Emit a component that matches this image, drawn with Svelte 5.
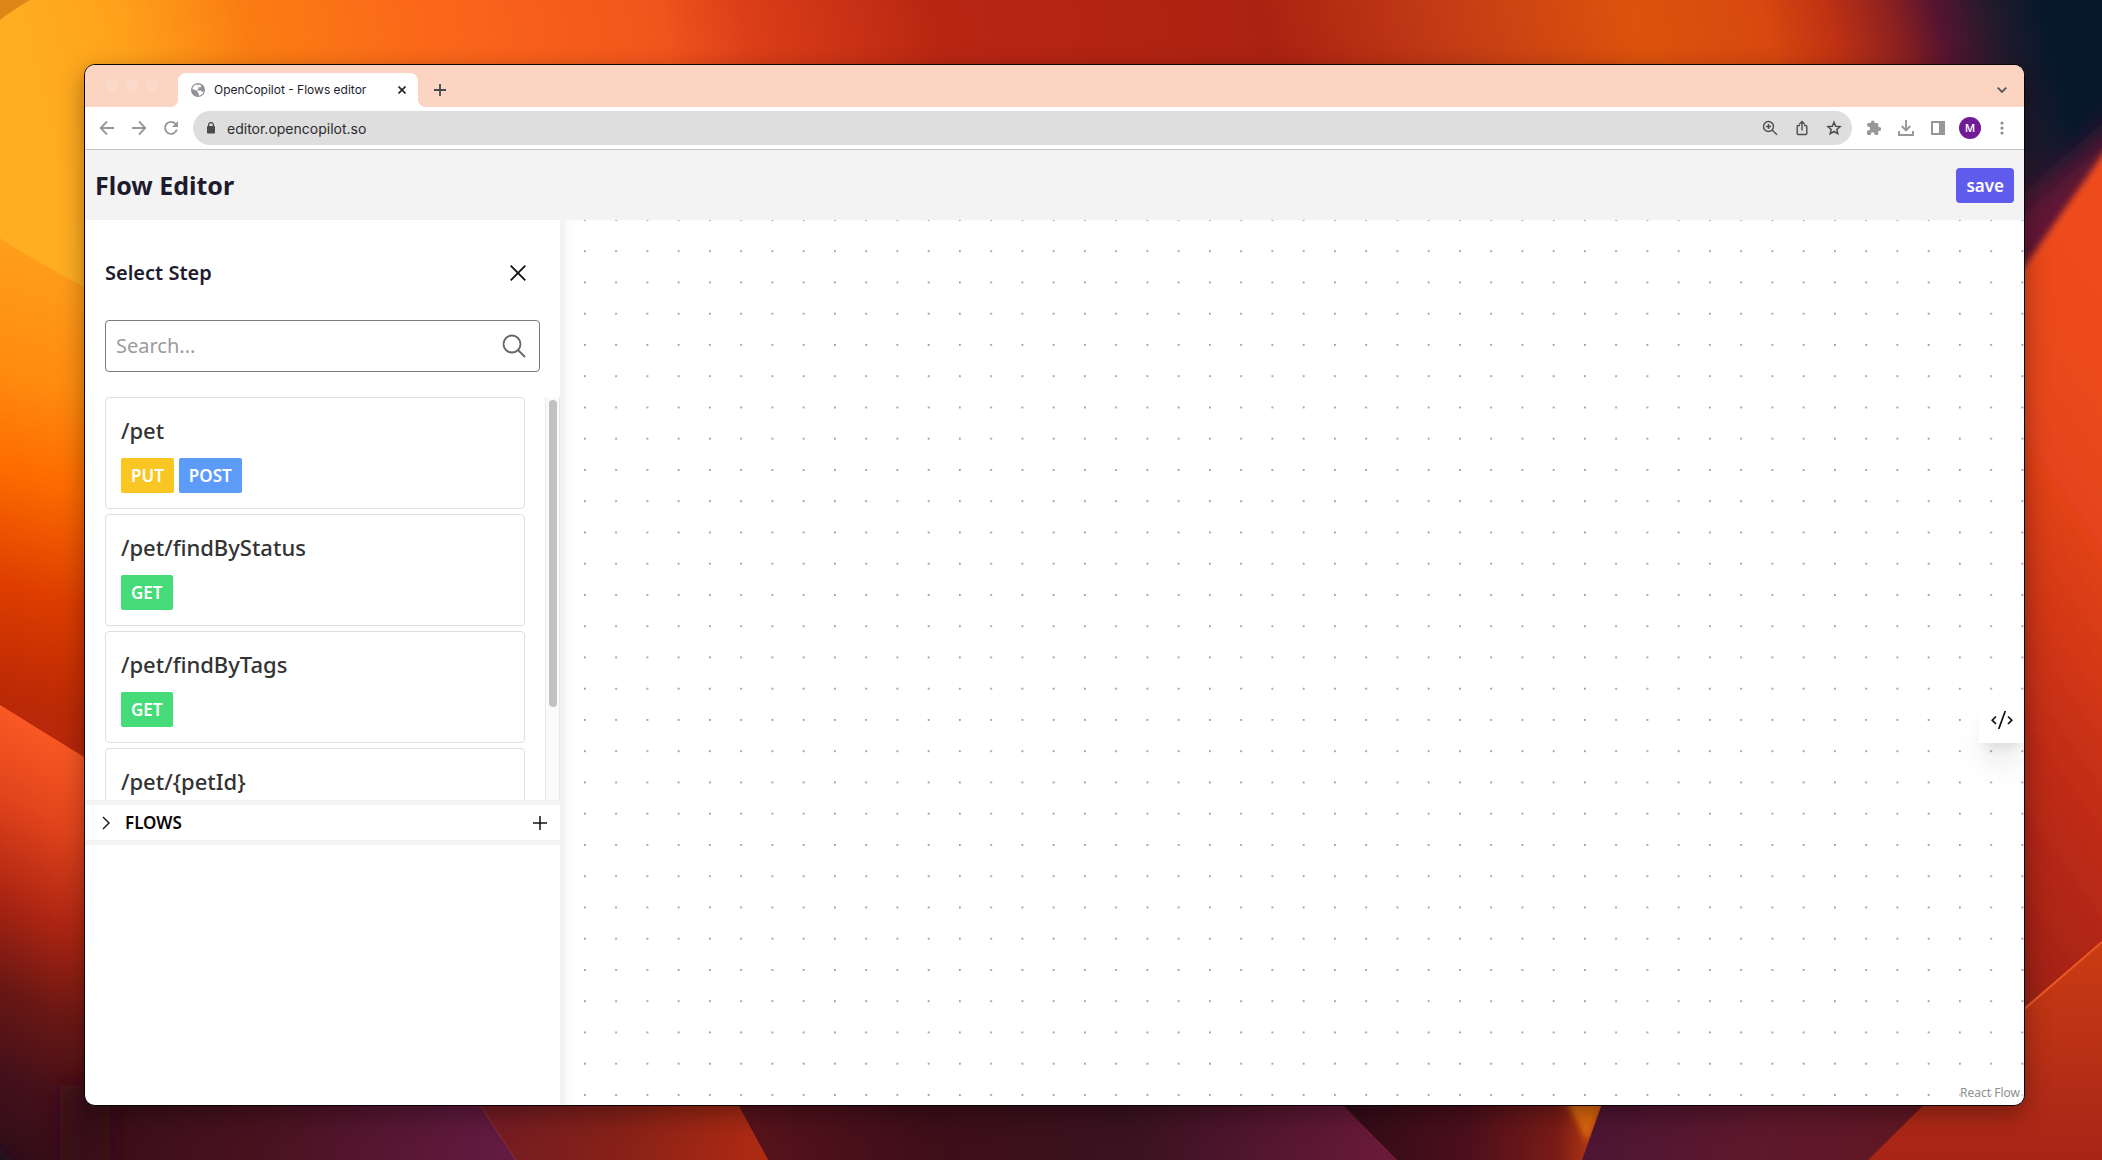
<script>
    let search = '';

    const paths = [
        { name: '/pet', methods: ['PUT', 'POST'] },
        { name: '/pet/findByStatus', methods: ['GET'] },
        { name: '/pet/findByTags', methods: ['GET'] },
        { name: '/pet/{petId}', methods: [] }
    ];

    $: visiblePaths = paths.filter((path) => path.name.toLowerCase().includes(search.toLowerCase()));
</script>

<div class="desktop">
    <svg class="wallpaper" viewBox="0 0 2102 1160" preserveAspectRatio="none" aria-hidden="true">
        <defs>
            <linearGradient id="top" gradientUnits="userSpaceOnUse" x1="0" y1="0" x2="2050" y2="-500">
                <stop offset="0" stop-color="#ffae22" />
                <stop offset="0.05" stop-color="#ffa31b" />
                <stop offset="0.11" stop-color="#fb7d12" />
                <stop offset="0.19" stop-color="#fb681a" />
                <stop offset="0.3" stop-color="#f2551c" />
                <stop offset="0.34" stop-color="#dc3f18" />
                <stop offset="0.43" stop-color="#b82612" />
                <stop offset="0.58" stop-color="#ac2211" />
                <stop offset="0.66" stop-color="#c23b15" />
                <stop offset="0.75" stop-color="#dd530d" />
                <stop offset="0.81" stop-color="#d8480f" />
                <stop offset="0.84" stop-color="#bf3213" />
                <stop offset="0.87" stop-color="#8b2020" />
                <stop offset="0.89" stop-color="#561430" />
                <stop offset="0.915" stop-color="#231a2c" />
                <stop offset="0.94" stop-color="#07182c" />
            </linearGradient>
            <linearGradient id="left" x1="0.1" y1="0" x2="0" y2="1">
                <stop offset="0" stop-color="#ffa01c" />
                <stop offset="0.25" stop-color="#ff8a0e" />
                <stop offset="0.42" stop-color="#fd6a00" />
                <stop offset="0.62" stop-color="#dd3d00" />
                <stop offset="0.8" stop-color="#bd2a05" />
                <stop offset="1" stop-color="#ab2216" />
            </linearGradient>
            <linearGradient id="leftLow" x1="0.1" y1="0" x2="0" y2="1">
                <stop offset="0" stop-color="#fb5a24" />
                <stop offset="0.2" stop-color="#e2441c" />
                <stop offset="0.42" stop-color="#ad2512" />
                <stop offset="0.62" stop-color="#691714" />
                <stop offset="0.82" stop-color="#42101a" />
                <stop offset="1" stop-color="#300d18" />
            </linearGradient>
            <linearGradient id="right" x1="0.2" y1="0" x2="0" y2="1">
                <stop offset="0" stop-color="#ee4b1c" />
                <stop offset="0.25" stop-color="#e6451a" />
                <stop offset="0.55" stop-color="#c22d15" />
                <stop offset="0.8" stop-color="#a42212" />
                <stop offset="1" stop-color="#781912" />
            </linearGradient>
            <linearGradient id="rightLow" x1="0" y1="0" x2="0" y2="1">
                <stop offset="0" stop-color="#c93c13" />
                <stop offset="1" stop-color="#a82417" />
            </linearGradient>
            <linearGradient id="plum">
                <stop offset="0" stop-color="#380e19" />
                <stop offset="0.4" stop-color="#49121f" />
                <stop offset="1" stop-color="#641b44" />
            </linearGradient>
            <linearGradient id="brick">
                <stop offset="0" stop-color="#701b25" />
                <stop offset="0.5" stop-color="#872118" />
                <stop offset="1" stop-color="#b02b12" />
            </linearGradient>
            <linearGradient id="wine">
                <stop offset="0" stop-color="#5a131c" />
                <stop offset="0.3" stop-color="#3e0e19" />
                <stop offset="0.6" stop-color="#3a1220" />
                <stop offset="1" stop-color="#6c1a3b" />
            </linearGradient>
            <linearGradient id="ember">
                <stop offset="0" stop-color="#2d0b18" />
                <stop offset="0.5" stop-color="#4b0f1b" />
                <stop offset="0.82" stop-color="#7a1b17" />
                <stop offset="1" stop-color="#c94310" />
            </linearGradient>
            <linearGradient id="berry">
                <stop offset="0" stop-color="#4c1533" />
                <stop offset="0.5" stop-color="#5f182c" />
                <stop offset="1" stop-color="#611722" />
            </linearGradient>
            <filter id="soft" x="-50%" y="-50%" width="200%" height="200%">
                <feGaussianBlur stdDeviation="14" />
            </filter>
            <filter id="glow">
                <feGaussianBlur stdDeviation="3" />
            </filter>
        </defs>
        <rect width="2102" height="1160" fill="url(#top)" />
        <path d="M0 0H30Q10 12 0 20Z" fill="#dd8617" />
        <path d="M0 238 Q70 285 200 340 V800 H0Z" fill="url(#left)" />
        <path d="M84 1090 H470 L516 1160 H84Z" fill="url(#plum)" />
        <path d="M0 705 L84 757 V1160 H0Z" fill="url(#leftLow)" />
        <path d="M60 1085 H110 V1180 H60Z" fill="#380e19" filter="url(#soft)" />
        <path d="M-40 1130 L20 1180 H-40Z" fill="#071a2e" filter="url(#soft)" />
        <path d="M1960 260 L2130 110 V200 L1950 360Z" fill="#641535" filter="url(#soft)" />
        <path d="M1980 330 L2110 144 V1080 H1980Z" fill="url(#right)" filter="url(#glow)" />
        <path d="M1980 1048 L2102 942 V1160 H1840Z" fill="url(#rightLow)" />
        <path d="M2000 1030 L2102 942" stroke="#ed5a20" stroke-width="2" />
        <path d="M470 1090 H730 L768 1160 H516Z" fill="url(#brick)" />
        <path d="M730 1090 H1328 L1397 1160 H768Z" fill="url(#wine)" />
        <path d="M1328 1090 H1607 L1582 1160 H1397Z" fill="url(#ember)" />
        <path d="M1566 1100 H1604 L1587 1142Z" fill="#dd6709" filter="url(#glow)" />
        <path d="M1607 1090 H1939 L1868 1160 H1582Z" fill="url(#berry)" />
    </svg>

    <div class="window">
        <div class="tab-strip">
            <div class="lights"><span></span><span></span><span></span></div>
            <div class="tab">
                <svg width="14" height="14" viewBox="0 0 14 14">
                    <circle cx="7" cy="7" r="7" fill="#919296" />
                    <path d="M6.6 1.3C3.8 1.5 1.8 3.4 1.4 5.8L4 7.3h2.2v1.6l1.5 1.2v2.6C10 12.5 12 10.900 12.6 8.5L11 8.7 9.8 7.4H6.7V5.7h1.5V4.2h1.7V2.3C9 1.8 8.3 1.5 7.7 1.4L6.4 3.2z" fill="#fff" />
                    <path d="M7.2 4.3h1.2v1.5H7.2zM1.3 7.6L4.6 9.3v3C2.7 11.3 1.4 9.6 1.3 7.6z" fill="#919296" />
                </svg>
                <span class="tab-title">OpenCopilot - Flows editor</span>
                <button class="plain" aria-label="Close tab">
                    <svg width="8" height="8" viewBox="0 0 8 8" stroke="#27272b" stroke-width="1.7"><path d="M0.5 0.5l7 7M7.5 0.5l-7 7" /></svg>
                </button>
            </div>
            <button class="plain new-tab" aria-label="New tab">
                <svg width="12" height="12" viewBox="0 0 12 12" stroke="#46474b" stroke-width="1.8"><path d="M6 0v12M0 6h12" /></svg>
            </button>
            <button class="plain tab-search" aria-label="Search tabs">
                <svg width="10" height="6" viewBox="0 0 10 6" fill="none" stroke="#55565a" stroke-width="1.8"><path d="M0.7 0.7L5 5l4.3-4.3" /></svg>
            </button>
        </div>

        <div class="toolbar">
            <button class="plain" aria-label="Back">
                <svg width="16" height="16" viewBox="0 0 16 16" fill="none" stroke="#96979b" stroke-width="1.8"><path d="M15 8H2M8 1.5L1.7 8 8 14.5" /></svg>
            </button>
            <button class="plain" aria-label="Forward">
                <svg width="16" height="16" viewBox="0 0 16 16" fill="none" stroke="#96979b" stroke-width="1.8"><path d="M1 8h13M8 1.5L14.3 8 8 14.5" /></svg>
            </button>
            <button class="plain" aria-label="Reload">
                <svg width="16" height="16" viewBox="0 0 16 16" fill="none" stroke="#96979b" stroke-width="1.9"><path d="M13.8 9.5A6 6 0 1 1 12.6 4" /><path d="M15 1v6H9z" fill="#96979b" stroke="none" /></svg>
            </button>
            <div class="omnibox">
                <svg width="10" height="12" viewBox="0 0 10 12"><rect x="1" y="4" width="8" height="7.5" rx="1" fill="#4a4b4f" /><path d="M2.6 5V3a2.4 2.4 0 0 1 4.8 0v2" fill="none" stroke="#4a4b4f" stroke-width="1.3" /></svg>
                <input class="url" aria-label="Address" value="editor.opencopilot.so" />
                <button class="plain" aria-label="Zoom">
                    <svg width="16" height="16" viewBox="0 0 16 16" fill="none" stroke="#4d4e52" stroke-width="1.4"><circle cx="6.5" cy="6.5" r="5" /><path d="M10 10l5 4.7M6.5 4v5M4 6.5h5" /></svg>
                </button>
                <button class="plain" aria-label="Share">
                    <svg width="16" height="16" viewBox="0 0 16 16" fill="none" stroke="#4d4e52" stroke-width="1.4"><path d="M6 5.5H4.2a1 1 0 0 0-1 1v7a1 1 0 0 0 1 1h7.6a1 1 0 0 0 1-1v-7a1 1 0 0 0-1-1H10M8 10.5V1.8M5.3 4.2L8 1.5l2.7 2.7" /></svg>
                </button>
                <button class="plain" aria-label="Bookmark">
                    <svg width="16" height="16" viewBox="0 0 16 16" fill="none" stroke="#4d4e52" stroke-width="1.5"><path d="M8 2.2l1.7 4 4.4.4-3.3 2.9 1 4.3L8 11.5l-3.8 2.3 1-4.3L1.9 6.6l4.4-.4z" /></svg>
                </button>
            </div>
            <button class="plain" aria-label="Extensions">
                <svg width="16" height="16" viewBox="0 0 16 16" fill="#96979b"><path d="M13.2 7H12.3V4.2a1.2 1.2 0 0 0-1.2-1.2H8.7V2.5a1.9 1.9 0 0 0-3.8 0V3H2.5A1.3 1.3 0 0 0 1.2 4.3V6.6h.9a2 2 0 0 1 0 4H1v3A1.3 1.3 0 0 0 2.4 15h2.4v-.8a1.9 1.9 0 0 1 3.8 0v.8h2.3A1.3 1.3 0 0 0 12.3 13.7V11h.9a2 2 0 0 0 0-4z" /></svg>
            </button>
            <button class="plain" aria-label="Downloads">
                <svg width="16" height="16" viewBox="0 0 16 16" fill="none" stroke="#96979b" stroke-width="1.9"><path d="M8 0v10M3.7 6L8 10.3 12.3 6M1 11v4h14v-4" /></svg>
            </button>
            <button class="plain" aria-label="Side panel">
                <svg width="16" height="16" viewBox="0 0 16 16"><path d="M1 1h14v14H1zM3 3v10h6V3z" fill="#96979b" fill-rule="evenodd" /></svg>
            </button>
            <button class="plain avatar" aria-label="Profile M">M</button>
            <button class="plain" aria-label="Menu">
                <svg width="16" height="16" viewBox="0 0 16 16" fill="#8c8d91"><circle cx="8" cy="3" r="1.6" /><circle cx="8" cy="8" r="1.6" /><circle cx="8" cy="13" r="1.6" /></svg>
            </button>
        </div>

        <header>
            <h1>Flow Editor</h1>
            <button class="save">save</button>
        </header>

        <div class="editor">
            <aside>
                <div class="select-step">
                    <div class="step-head">
                        <h2>Select Step</h2>
                        <button class="plain" aria-label="Close panel">
                            <svg width="16" height="16" viewBox="0 0 16 16" stroke="#111" stroke-width="1.8"><path d="M0.7 0.7l14.6 14.6M15.3 0.7L0.7 15.3" /></svg>
                        </button>
                    </div>
                    <label class="search">
                        <input type="text" placeholder="Search..." aria-label="Search paths" bind:value={search} />
                        <svg width="24" height="24" viewBox="0 0 24 24" fill="none" stroke="#666" stroke-width="1.8"><circle cx="10" cy="10" r="8.5" /><path d="M16 16l7 7" /></svg>
                    </label>
                </div>
                <div class="list-wrap">
                    <ul>
                        {#each visiblePaths as path}
                            <li>
                                <h3>{path.name}</h3>
                                <div class="methods">
                                    {#each path.methods as method}
                                        <span class="method {method.toLowerCase()}">{method}</span>
                                    {/each}
                                </div>
                            </li>
                        {/each}
                    </ul>
                    <div class="scroll-track"><div class="scroll-thumb"></div></div>
                </div>
                <div class="flows">
                    <button class="plain flows-toggle">
                        <svg width="8" height="14" viewBox="0 0 8 14" fill="none" stroke="#111" stroke-width="1.4"><path d="M1 1l6 6-6 6" /></svg>
                        FLOWS
                    </button>
                    <button class="plain" aria-label="Add flow">
                        <svg width="14" height="14" viewBox="0 0 14 14" stroke="#111" stroke-width="1.5"><path d="M7 0v14M0 7h14" /></svg>
                    </button>
                </div>
            </aside>

            <main>
                <svg class="dots" width="100%" height="100%" aria-hidden="true">
                    <defs>
                        <!-- 25 unit grid seen at 125% -->
                        <pattern id="grid" width="25" height="25" patternUnits="userSpaceOnUse" patternTransform="translate(19 -1) scale(1.25)">
                            <circle cx="0.7" cy="0.7" r="0.7" fill="#77777e" />
                        </pattern>
                    </defs>
                    <rect width="100%" height="100%" fill="url(#grid)" />
                </svg>
                <button class="code" aria-label="Show code">
                    <svg width="22" height="18" viewBox="0 0 22 18" fill="none" stroke="#111" stroke-width="1.7"><path d="M5 5.5L1.2 9.2 5 13M17 5.5l3.8 3.7L17 13M14.3 0L7.7 18" /></svg>
                </button>
                <a class="attribution" href="https://reactflow.dev">React Flow</a>
            </main>
        </div>
    </div>
</div>

<style>
    :global(body) {
        margin: 0;
    }

    .desktop {
        position: relative;
        display: flex;
        box-sizing: border-box;
        min-height: 100vh;
        padding: 64px 77px 54px 84px;
        font-family: 'Noto Sans', 'Open Sans', sans-serif;
        color: #1e1b2e;
    }

    .wallpaper {
        position: absolute;
        inset: 0;
        width: 100%;
        height: 100%;
    }

    .window {
        position: relative;
        flex: 1;
        display: flex;
        flex-direction: column;
        min-width: 0;
        overflow: hidden;
        background: #fff;
        border: 1px solid #0a0506;
        border-radius: 11px;
        box-shadow: 0 8px 24px rgba(0, 0, 0, 0.35);
    }

    h1, h2, h3, ul {
        margin: 0;
        padding: 0;
    }

    svg {
        display: block;
        flex: none;
    }

    .plain {
        display: flex;
        align-items: center;
        padding: 0;
        border: 0;
        background: none;
        font: inherit;
        color: inherit;
    }

    /* browser chrome */
    .tab-strip {
        display: flex;
        align-items: center;
        height: 42px;
        padding: 8px 17px 0 21px;
        box-sizing: border-box;
        background: #fbd5c1;
        font-family: Inter, sans-serif;
    }

    .lights {
        display: flex;
        gap: 8px;
        width: 72px;
        padding-bottom: 8px;
    }

    .lights span {
        width: 12px;
        height: 12px;
        border-radius: 50%;
        background: #fbdacb;
    }

    .tab {
        position: relative;
        display: flex;
        align-items: center;
        gap: 9px;
        width: 240px;
        height: 34px;
        box-sizing: border-box;
        padding: 0 12px 0 13px;
        border-radius: 8px 8px 0 0;
        background: #fff;
    }

    .tab::before,
    .tab::after {
        content: '';
        position: absolute;
        bottom: 0;
        left: -8px;
        width: 8px;
        height: 8px;
        background: radial-gradient(circle at 0 0, transparent 8px, #fff 8px);
    }

    .tab::after {
        left: 100%;
        background: radial-gradient(circle at 100% 0, transparent 8px, #fff 8px);
    }

    .tab-title {
        flex: 1;
        font-size: 12px;
        line-height: 16px;
        white-space: nowrap;
    }

    .new-tab {
        margin-left: 16px;
    }

    .tab-search {
        margin-left: auto;
    }

    .toolbar {
        display: flex;
        align-items: center;
        gap: 16px;
        height: 42px;
        padding: 0 14px;
        border-bottom: 1px solid #c3c8c4;
    }

    .omnibox {
        flex: 1;
        display: flex;
        align-items: center;
        gap: 16px;
        height: 34px;
        box-sizing: border-box;
        margin: 0 -2px;
        padding: 0 10px 0 13px;
        border-radius: 17px;
        background: #dedede;
    }

    .omnibox .url {
        flex: 1;
        min-width: 0;
        margin-left: -5px;
        padding: 0;
        border: 0;
        background: none;
        outline: none;
        font: 14px Inter, sans-serif;
        color: #2b2b30;
    }

    .avatar {
        justify-content: center;
        width: 22px;
        height: 22px;
        margin: 0 -3px;
        border-radius: 50%;
        background: #701b97;
        font: 500 11px Inter, sans-serif;
        color: #fff;
    }

    /* flow editor page */
    header {
        display: flex;
        align-items: center;
        justify-content: space-between;
        height: 70px;
        padding: 0 10px;
        background: #f3f3f3;
    }

    h1 {
        font-size: 25px;
        font-weight: 700;
    }

    .save {
        height: 35px;
        padding: 0 10px;
        border: 0;
        border-radius: 4px;
        background: #5e5bed;
        font: 600 17px 'Noto Sans', sans-serif;
        color: #fff;
    }

    .editor {
        flex: 1;
        display: flex;
        min-height: 0;
    }

    aside {
        width: 475px;
        flex: none;
        border-right: 5px solid #f3f3f3;
    }

    .select-step {
        padding: 35px 20px 25px;
    }

    .step-head {
        display: flex;
        align-items: center;
        justify-content: space-between;
        height: 35px;
        padding-right: 14px;
        margin-bottom: 30px;
    }

    h2 {
        font-size: 20px;
        font-weight: 600;
    }

    .search {
        display: flex;
        align-items: center;
        height: 52px;
        box-sizing: border-box;
        padding: 0 13px 0 10px;
        border: 1px solid #7b7b7b;
        border-radius: 4px;
    }

    .search input {
        flex: 1;
        min-width: 0;
        padding: 0 0 2px;
        border: 0;
        outline: none;
        background: none;
        font: 20px 'Noto Sans', sans-serif;
        color: inherit;
    }

    .search input::placeholder {
        color: #9b9b9e;
    }

    .list-wrap {
        display: flex;
        height: 403px;
        overflow: hidden;
    }

    ul {
        flex: 1;
        display: flex;
        flex-direction: column;
        gap: 5px;
        padding: 0 20px;
        list-style: none;
    }

    li {
        padding: 15px;
        border: 1px solid #dfdfdf;
        border-radius: 4px;
    }

    h3 {
        margin-bottom: 11px;
        font-size: 22px;
        font-weight: 500;
        line-height: 34px;
        color: #333;
    }

    .methods {
        display: flex;
        gap: 5px;
        min-height: 35px;
    }

    .method {
        padding: 0 10px;
        border-radius: 2px;
        font-size: 17px;
        font-weight: 600;
        line-height: 35px;
        color: #fff;
    }

    .put {
        background: #fac623;
    }

    .post {
        background: #5d9bf9;
    }

    .get {
        background: #45db78;
    }

    .scroll-track {
        width: 15px;
        box-sizing: border-box;
        padding: 3px;
        border: 1px solid #e8e8e8;
        border-width: 0 1px;
        background: #fafafa;
    }

    .scroll-thumb {
        width: 8px;
        height: 307px;
        border-radius: 4px;
        background: #c1c1c1;
    }

    .flows {
        display: flex;
        align-items: center;
        justify-content: space-between;
        height: 35px;
        padding: 0 13px 0 17px;
        border: 5px solid #f3f3f3;
        border-width: 5px 0;
    }

    .flows-toggle {
        gap: 15px;
        font-size: 17px;
        font-weight: 600;
        color: #0c0606;
    }

    main {
        position: relative;
        flex: 1;
        min-width: 0;
        box-shadow: inset 12px 6px 12px -10px rgba(0, 0, 0, 0.04);
    }

    .dots {
        position: absolute;
        inset: 0;
    }

    .code {
        position: absolute;
        right: 0;
        top: 54%;
        display: flex;
        align-items: center;
        justify-content: center;
        width: 45px;
        height: 45px;
        padding: 0;
        border: 0;
        background: #fff;
        box-shadow: 0 25px 31px -6px rgba(0, 0, 0, 0.1), 0 10px 12px -6px rgba(0, 0, 0, 0.1);
    }

    .attribution {
        position: absolute;
        right: 0;
        bottom: 0;
        padding: 3px 4px 4px;
        background: rgba(255, 255, 255, 0.5);
        font-size: 12px;
        text-decoration: none;
        color: #8f8f8f;
    }
</style>
